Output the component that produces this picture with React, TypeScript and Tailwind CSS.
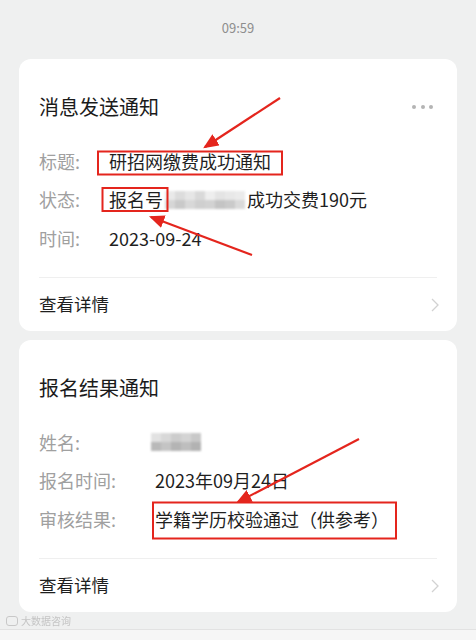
import React from 'react';

const FONT = { fontFamily: '"Noto Sans CJK SC", "Noto Sans", sans-serif' };

interface Row {
  label: string;
  value: React.ReactNode;
}

function Mosaic({ blocks, className }: { blocks: string[][]; className?: string }) {
  return (
    <span className={`inline-flex flex-col blur-[1px] align-middle ${className ?? ''}`}>
      {blocks.map((line, i) => (
        <span key={i} className="flex">
          {line.map((c, j) => (
            <span key={j} className="w-[10px] h-[9px]" style={{ background: c }} />
          ))}
        </span>
      ))}
    </span>
  );
}

function NoticeCard({
  title,
  rows,
  labelWidth,
  more,
}: {
  title: string;
  rows: Row[];
  labelWidth: string;
  more?: boolean;
}) {
  return (
    <div className="mx-[19px] h-[272px] rounded-[12px] bg-white flex flex-col">
      <div className="flex items-center justify-between pl-[20px] pr-[24px] pt-[36px]">
        <span className="text-[20px] leading-[24px] text-[#1b1b1b]">{title}</span>
        {more && (
          <span className="flex gap-[4.5px]">
            <span className="w-[4px] h-[4px] rounded-full bg-[#b4b4b4]" />
            <span className="w-[4px] h-[4px] rounded-full bg-[#b4b4b4]" />
            <span className="w-[4px] h-[4px] rounded-full bg-[#b4b4b4]" />
          </span>
        )}
      </div>
      <div className="mt-[23px] px-[20px] flex flex-col">
        {rows.map((r) => (
          <div key={r.label} className="flex items-center h-[38.5px] text-[18px]">
            <span className={`${labelWidth} shrink-0 text-[#a0a0a0]`}>{r.label}</span>
            <span className="text-[#1f1f1f] flex items-center whitespace-nowrap">{r.value}</span>
          </div>
        ))}
      </div>
      <div className="mt-auto mx-[20px] border-t border-[#efefef]" />
      <div className="h-[53px] flex items-center justify-between pl-[20px] pr-[18px]">
        <span className="text-[17.5px] text-[#1f1f1f]">查看详情</span>
        <svg width="8" height="14" viewBox="0 0 8 14" fill="none">
          <path d="M1 1l6 6-6 6" stroke="#d2d2d2" strokeWidth="1.3" />
        </svg>
      </div>
    </div>
  );
}

export default function App() {
  const rowMosaic = [
    ['#e9e9e9', '#dcdcdc', '#e6e6e6', '#d9d9d9', '#eeeeee', '#e4e4e4', '#e8e8e8', '#ebebeb'],
    ['#d6d6d6', '#c9c9c9', '#d8d8d8', '#cfcfcf', '#d2d2d2', '#c4c4c4', '#cacaca', '#dadada'],
  ];
  const nameMosaic = [
    ['#e2e2e2', '#d8d8d8', '#cccccc', '#d4d4d4', '#c8c8c8'],
    ['#b9b9b9', '#c4c4c4', '#b4b4b4', '#bebebe', '#b2b2b2'],
  ];

  return (
    <div className="relative w-[476px] h-[640px] overflow-hidden bg-[#eff0f0]" style={FONT}>
      <div className="h-[59px] pt-[19px] text-center text-[13px] leading-[18px] text-[#8e8e8e]">09:59</div>

      <NoticeCard
        title="消息发送通知"
        more
        labelWidth="w-[70px]"
        rows={[
          { label: '标题:', value: '研招网缴费成功通知' },
          {
            label: '状态:',
            value: (
              <>
                报名号
                <Mosaic blocks={rowMosaic} className="ml-[2px] mr-[2px]" />
                成功交费190元
              </>
            ),
          },
          { label: '时间:', value: '2023-09-24' },
        ]}
      />

      <div className="h-[9px]" />

      <NoticeCard
        title="报名结果通知"
        labelWidth="w-[116px]"
        rows={[
          { label: '姓名:', value: <Mosaic blocks={nameMosaic} className="-ml-[4px]" /> },
          { label: '报名时间:', value: '2023年09月24日' },
          { label: '审核结果:', value: '学籍学历校验通过（供参考）' },
        ]}
      />

      <div className="h-[17px] flex items-center pl-[6px] gap-[3px] text-[10px] text-[#c4c4c4] blur-[0.5px]">
        <span className="w-[12px] h-[10px] rounded-[3px] border border-[#c8c8c8]" />
        <span>大数据咨询</span>
      </div>
      <div className="border-t border-[#e2e2e2] h-[11px] bg-[#f6f6f6]" />

      <svg className="absolute inset-0 pointer-events-none" width="476" height="640" viewBox="0 0 476 640">
        <defs>
          <marker id="ah" markerWidth="7" markerHeight="6" refX="6" refY="3" orient="auto" markerUnits="strokeWidth">
            <path d="M0 0L7 3L0 6z" fill="#e4251d" />
          </marker>
        </defs>
        <g fill="none" stroke="#e4251d" strokeWidth="2">
          <rect x="98" y="151.5" width="184" height="23" />
          <rect x="102.5" y="188" width="65" height="23" />
          <rect x="153" y="502.5" width="243" height="36" />
        </g>
        <g stroke="#e4251d" strokeWidth="2.2" markerEnd="url(#ah)">
          <line x1="280" y1="98" x2="205" y2="147" />
          <line x1="252" y1="255" x2="151" y2="217" />
          <line x1="359" y1="439" x2="238" y2="502" />
        </g>
      </svg>
    </div>
  );
}
